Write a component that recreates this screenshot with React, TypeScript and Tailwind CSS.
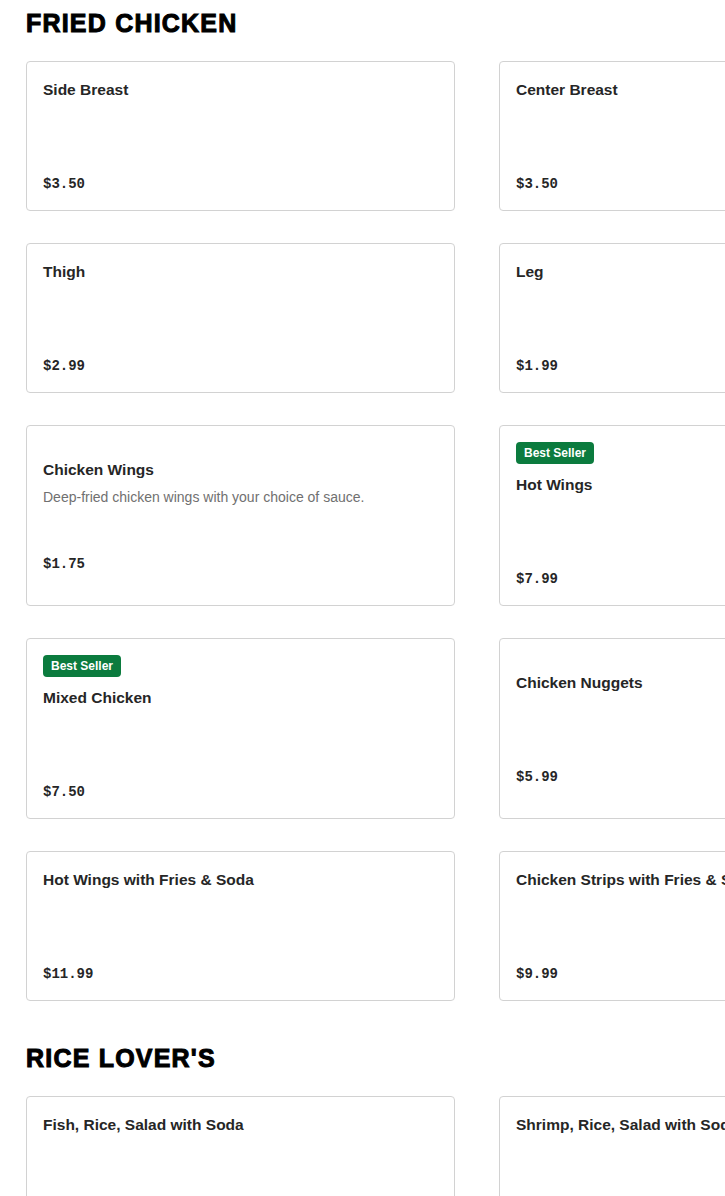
type Item = {
    name: string;
    price: string;
    desc?: string;
    badge?: boolean;
};

const sections: { title: string; items: Item[] }[] = [
    {
        title: 'FRIED CHICKEN',
        items: [
            { name: 'Side Breast', price: '$3.50' },
            { name: 'Center Breast', price: '$3.50' },
            { name: 'Thigh', price: '$2.99' },
            { name: 'Leg', price: '$1.99' },
            { name: 'Chicken Wings', price: '$1.75', desc: 'Deep-fried chicken wings with your choice of sauce.' },
            { name: 'Hot Wings', price: '$7.99', badge: true },
            { name: 'Mixed Chicken', price: '$7.50', badge: true },
            { name: 'Chicken Nuggets', price: '$5.99' },
            { name: 'Hot Wings with Fries & Soda', price: '$11.99' },
            { name: 'Chicken Strips with Fries & Soda', price: '$9.99' },
        ],
    },
    {
        title: "RICE LOVER'S",
        items: [
            { name: 'Fish, Rice, Salad with Soda', price: '$10.99' },
            { name: 'Shrimp, Rice, Salad with Soda', price: '$11.99' },
        ],
    },
];

function MenuCard({ item }: { item: Item }) {
    return (
        <div className="flex flex-col justify-center rounded-[4px] border border-[#d2d2d2] bg-white px-4 py-4">
            {item.badge && (
                <div className="mb-[9px] flex">
                    <span className="flex h-[22px] items-center rounded-[4px] bg-[#0b7b3e] px-2 text-[12px] font-bold text-white">
                        Best Seller
                    </span>
                </div>
            )}
            <div className="h-[96px]">
                <div className="whitespace-nowrap text-[15.5px] leading-6 font-bold text-[#262626]">{item.name}</div>
                {item.desc && (
                    <div className="mt-[5px] text-[14px] leading-5 text-[#707070]">{item.desc}</div>
                )}
            </div>
            <div className="font-['Liberation_Mono',monospace] text-[14px] leading-5 font-bold text-[#262626]">
                {item.price}
            </div>
        </div>
    );
}

export default function App() {
    return (
        <div className="h-[1196px] w-[725px] overflow-hidden bg-white font-['Liberation_Sans',Arial,sans-serif]">
            <div className="w-[950px] pl-[26px] pt-[11px]">
                {sections.map((section, i) => (
                    <section key={section.title} className={i > 0 ? 'mt-[45px]' : ''}>
                        <h2 className="mb-[25px] text-[25px] leading-[25px] font-bold tracking-[1.2px] text-black [-webkit-text-stroke:1px_black]">
                            {section.title}
                        </h2>
                        <div className="grid grid-cols-[429px_429px] gap-x-[44px] gap-y-[32px]">
                            {section.items.map((item) => (
                                <MenuCard key={item.name} item={item} />
                            ))}
                        </div>
                    </section>
                ))}
            </div>
        </div>
    );
}
